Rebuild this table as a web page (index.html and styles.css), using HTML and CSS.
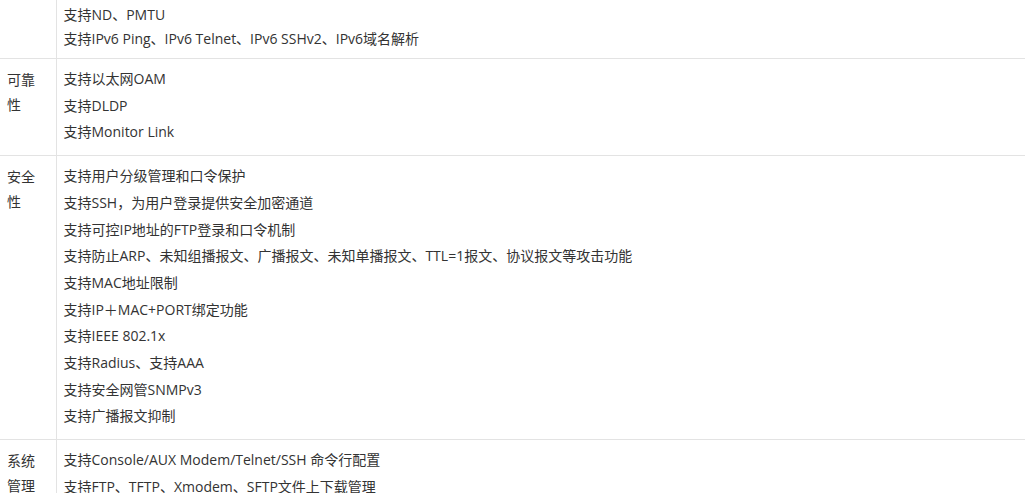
FILE: index.html
```html
<!DOCTYPE html>
<html>
<head>
<meta charset="utf-8">
<link rel="stylesheet" href="styles.css">
</head>
<body>
<table class="spec">
  <tr class="first">
    <td class="name"></td>
    <td class="val">
      <p class="tight">支持ND、PMTU</p>
      <p class="tight">支持IPv6 Ping、IPv6 Telnet、IPv6 SSHv2、IPv6域名解析</p>
    </td>
  </tr>
  <tr>
    <td class="name">可靠<br>性</td>
    <td class="val">
      <p>支持以太网OAM</p>
      <p>支持DLDP</p>
      <p>支持Monitor Link</p>
    </td>
  </tr>
  <tr>
    <td class="name">安全<br>性</td>
    <td class="val">
      <p>支持用户分级管理和口令保护</p>
      <p>支持SSH，为用户登录提供安全加密通道</p>
      <p>支持可控IP地址的FTP登录和口令机制</p>
      <p>支持防止ARP、未知组播报文、广播报文、未知单播报文、TTL=1报文、协议报文等攻击功能</p>
      <p>支持MAC地址限制</p>
      <p>支持IP＋MAC+PORT绑定功能</p>
      <p>支持IEEE 802.1x</p>
      <p>支持Radius、支持AAA</p>
      <p>支持安全网管SNMPv3</p>
      <p>支持广播报文抑制</p>
    </td>
  </tr>
  <tr>
    <td class="name">系统<br>管理</td>
    <td class="val">
      <p>支持Console/AUX Modem/Telnet/SSH 命令行配置</p>
      <p>支持FTP、TFTP、Xmodem、SFTP文件上下载管理</p>
    </td>
  </tr>
</table>
</body>
</html>
```

FILE: styles.css
```css
* {box-sizing: border-box;}
body {margin: 0; background: #fff; color: #333; font-family: "Open Sans", "Noto Sans CJK SC", sans-serif; font-size: 14px; overflow: hidden;}
.spec {width: 1025px; border-collapse: collapse; margin-top: -1px;}
.spec td {border-top: 1px solid #e3e3e3; border-bottom: 1px solid #e3e3e3; vertical-align: top;}
.name {width: 56px; padding: 8px 0 0 7px; line-height: 25px; border-right: 1px solid #e3e3e3;}
.val {padding: 7px 7px 9px 7px;}
.val p {margin: 0; line-height: 26.7px; white-space: nowrap;}
.first .val {padding-top: 3px; padding-bottom: 7px;}
.val p.tight {line-height: 24px;}
```
